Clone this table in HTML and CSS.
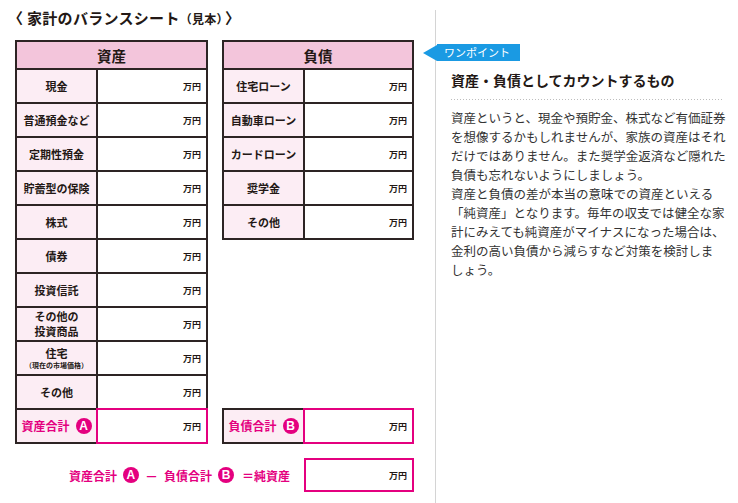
FILE: index.html
```html
<!DOCTYPE html>
<html lang="ja">
<head>
<meta charset="utf-8">
<link rel="stylesheet" href="styles.css">
</head>
<body>
<div class="page">
  <section class="left">
    <h1 class="title">〈 家計のバランスシート<small>（見本）</small>〉</h1>
    <div class="sheet">
      <div class="col col-assets">
        <div class="tbl tbl-a">
          <div class="head">資産</div>
          <div class="lab">現金</div><div class="val">万円</div>
          <div class="lab">普通預金など</div><div class="val">万円</div>
          <div class="lab">定期性預金</div><div class="val">万円</div>
          <div class="lab">貯蓄型の保険</div><div class="val">万円</div>
          <div class="lab">株式</div><div class="val">万円</div>
          <div class="lab">債券</div><div class="val">万円</div>
          <div class="lab">投資信託</div><div class="val">万円</div>
          <div class="lab lab-2"><span>その他の</span><span>投資商品</span></div><div class="val">万円</div>
          <div class="lab"><span>住宅</span><span class="sub">（現在の市場価格）</span></div><div class="val">万円</div>
          <div class="lab">その他</div><div class="val">万円</div>
          <div class="lab lab-total">資産合計<span class="badge">A</span></div><div class="val val-total">万円</div>
        </div>
      </div>
      <div class="col col-debt">
        <div class="tbl tbl-b">
          <div class="head">負債</div>
          <div class="lab">住宅ローン</div><div class="val">万円</div>
          <div class="lab">自動車ローン</div><div class="val">万円</div>
          <div class="lab">カードローン</div><div class="val">万円</div>
          <div class="lab">奨学金</div><div class="val">万円</div>
          <div class="lab">その他</div><div class="val">万円</div>
        </div>
        <div class="tbl tbl-b tbl-total">
          <div class="lab lab-total">負債合計<span class="badge">B</span></div><div class="val val-total">万円</div>
        </div>
      </div>
    </div>
    <div class="formula">
      <p class="eq">資産合計<span class="badge">A</span><span class="minus">－</span>負債合計<span class="badge">B</span><span class="equal">＝</span>純資産</p>
      <div class="net">万円</div>
    </div>
  </section>
  <aside class="right">
    <div class="tag">ワンポイント</div>
    <h2 class="heading">資産・負債としてカウントするもの</h2>
    <p class="body">資産というと、現金や預貯金、株式など有価証券<br>を想像するかもしれませんが、家族の資産はそれ<br>だけではありません。また奨学金返済など隠れた<br>負債も忘れないようにしましょう。<br>資産と負債の差が本当の意味での資産といえる<br>「純資産」となります。毎年の収支では健全な家<br>計にみえても純資産がマイナスになった場合は、<br>金利の高い負債から減らすなど対策を検討しま<br>しょう。</p>
  </aside>
</div>
</body>
</html>
```
FILE: styles.css
```css
html, body {
  margin: 0;
  padding: 0;
  background: #fff;
}
body {
  font-family: "Noto Sans CJK JP", "Noto Sans", sans-serif;
  color: #231815;
}
.page {
  display: flex;
  height: 503px;
  box-sizing: border-box;
  padding-top: 10px;
}
.left {
  width: 436px;
  box-sizing: border-box;
  border-right: 1px solid #d4d4d4;
  padding-left: 15px;
}
.title {
  margin: 0 0 14px -7px;
  height: 16px;
  line-height: 16px;
  font-size: 15px;
  font-weight: 700;
  letter-spacing: 0.3px;
  white-space: nowrap;
}
.title small {
  font-size: 12px;
  font-weight: 700;
  letter-spacing: 0.3px;
  margin-right: 2px;
}
.sheet {
  display: flex;
  gap: 14px;
}
.col {
  display: flex;
  flex-direction: column;
}
.col-assets { width: 193px; }
.col-debt { width: 192px; }
.tbl {
  display: grid;
  border-top: 2px solid #2d2424;
  border-left: 2px solid #2d2424;
}
.tbl-a { grid-template-columns: 81px 110px; }
.tbl-b { grid-template-columns: 81px 109px; }
.tbl-total { margin-top: auto; }
.head {
  grid-column: 1 / 3;
  height: 28px;
  box-sizing: border-box;
  border-right: 2px solid #2d2424;
  border-bottom: 2px solid #2d2424;
  background: #f3c5db;
  display: flex;
  align-items: center;
  justify-content: center;
  font-size: 14.5px;
  font-weight: 700;
}
.lab, .val {
  height: 34px;
  box-sizing: border-box;
  border-right: 2px solid #2d2424;
  border-bottom: 2px solid #2d2424;
  display: flex;
  align-items: center;
}
.lab {
  background: #fcedf4;
  justify-content: center;
  flex-direction: column;
  text-align: center;
  font-size: 11px;
  font-weight: 700;
  line-height: 14px;
}
.lab-2 { line-height: 15px; }
.sub {
  font-size: 7px;
  line-height: 10px;
  font-weight: 700;
}
.val {
  justify-content: flex-end;
  padding-right: 5px;
  font-size: 9px;
  font-weight: 700;
}
.lab-total {
  flex-direction: row;
  color: #e4007f;
  font-size: 12px;
  gap: 6px;
}
.val-total {
  height: 36px;
  margin: -2px 0 0 -2px;
  border: 2px solid #e4007f;
  padding-right: 5px;
}
.badge {
  display: inline-flex;
  align-items: center;
  justify-content: center;
  width: 16px;
  height: 16px;
  border-radius: 50%;
  background: #e4007f;
  color: #fff;
  font-family: "Liberation Sans", Arial, sans-serif;
  font-size: 12px;
  font-weight: 700;
  line-height: 1;
}
.formula {
  display: flex;
  justify-content: flex-end;
  align-items: center;
  gap: 14px;
  width: 399px;
  margin-top: 14px;
}
.eq {
  margin: 0;
  display: flex;
  align-items: center;
  color: #e4007f;
  font-size: 12px;
  font-weight: 700;
  white-space: nowrap;
}
.eq .badge { margin: 0 6px; }
.minus { margin: 0 6px 0 0; font-size: 13px; }
.equal { margin-left: 2px; }
.net {
  width: 110px;
  height: 34px;
  box-sizing: border-box;
  border: 2px solid #e4007f;
  display: flex;
  align-items: center;
  justify-content: flex-end;
  padding-right: 5px;
  font-size: 9px;
  font-weight: 700;
}
.right {
  flex: 1;
  padding: 34px 16px 0 15px;
  min-width: 0;
}
.tag {
  display: flex;
  align-items: center;
  width: max-content;
  height: 17px;
  margin-left: -28px;
  padding-right: 10px;
  color: #fff;
  font-size: 11px;
  line-height: 17px;
  background: linear-gradient(to right, transparent 14px, #1a9ae3 14px);
}
.tag::before {
  content: "";
  width: 0;
  height: 0;
  margin-right: 7px;
  border-top: 8.5px solid transparent;
  border-bottom: 8.5px solid transparent;
  border-right: 14px solid #1a9ae3;
}
.heading {
  margin: 9px 0 0;
  padding-bottom: 10px;
  line-height: 20px;
  font-size: 14px;
  font-weight: 700;
  color: #231815;
  background-image: linear-gradient(to right, #bdbdbd 1px, transparent 1px);
  background-size: 3px 1px;
  background-repeat: repeat-x;
  background-position: left bottom;
  white-space: nowrap;
}
.body {
  margin: 8px 0 0;
  font-size: 12.5px;
  line-height: 19px;
  color: #333;
  white-space: nowrap;
}
```
